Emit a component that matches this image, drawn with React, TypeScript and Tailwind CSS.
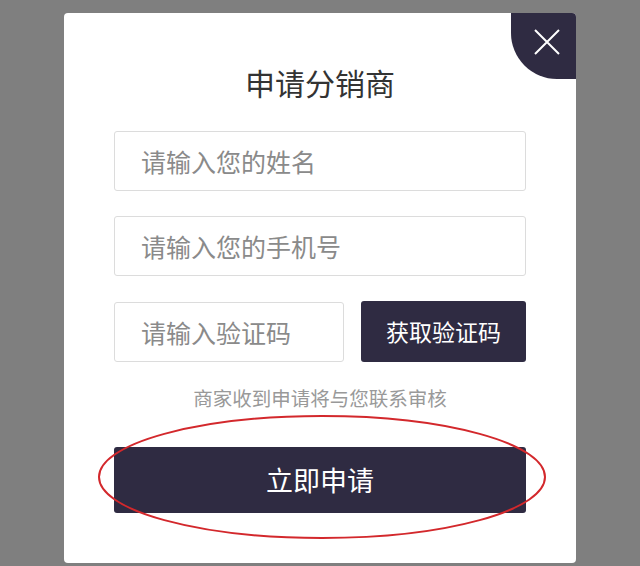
import { useState } from 'react';

const font = { fontFamily: '"Noto Sans CJK SC", "Noto Sans", sans-serif' };

export default function App() {
  const [name, setName] = useState('');
  const [phone, setPhone] = useState('');
  const [code, setCode] = useState('');

  return (
    <div className="w-[640px] h-[566px] bg-[#7f7f7f] pt-[13px] overflow-hidden relative" style={font}>
      <div className="ml-[64px] w-[512px] h-[550px] bg-white rounded-[4px] relative px-[50px]">
        {/* close */}
        <button className="absolute top-0 right-0 w-[65px] h-[66px] bg-[#2f2b42] rounded-tr-[4px] rounded-bl-[46px]">
          <svg className="absolute left-[23px] top-[16px]" width="26" height="26" viewBox="0 0 26 26">
            <path d="M1 1 L25 25 M25 1 L1 25" stroke="#fff" strokeWidth="2" />
          </svg>
        </button>

        <h2 className="pt-[54px] text-center text-[30px] leading-[30px] text-[#333]">申请分销商</h2>

        <div className="mt-[34px] flex flex-col gap-[25px]">
          <input
            value={name}
            onChange={(e) => setName(e.target.value)}
            placeholder="请输入您的姓名"
            className="h-[60px] w-full border border-[#dcdcdc] rounded-[3px] px-[26px] text-[25px] text-[#333] placeholder:text-[#8a8a8a] outline-none"
          />
          <input
            value={phone}
            onChange={(e) => setPhone(e.target.value)}
            placeholder="请输入您的手机号"
            className="h-[60px] w-full border border-[#dcdcdc] rounded-[3px] px-[26px] text-[25px] text-[#333] placeholder:text-[#8a8a8a] outline-none"
          />
          <div className="flex items-center gap-[17px]">
            <input
              value={code}
              onChange={(e) => setCode(e.target.value)}
              placeholder="请输入验证码"
              className="h-[60px] w-[230px] border border-[#dcdcdc] rounded-[3px] px-[26px] text-[25px] text-[#333] placeholder:text-[#8a8a8a] outline-none"
            />
            <button className="h-[61px] w-[165px] bg-[#2f2b42] rounded-[3px] text-white text-[23px]">获取验证码</button>
          </div>
        </div>

        <p className="mt-[26px] text-center text-[19.5px] leading-[20px] text-[#999]">商家收到申请将与您联系审核</p>

        <button className="mt-[39px] h-[66px] w-full bg-[#2f2b42] rounded-[3px] text-white text-[27px]">立即申请</button>
      </div>

      {/* annotation */}
      <svg className="absolute left-0 top-0 pointer-events-none" width="640" height="566">
        <ellipse cx="322" cy="477" rx="223" ry="61" fill="none" stroke="#d3282c" strokeWidth="2" />
      </svg>
    </div>
  );
}
